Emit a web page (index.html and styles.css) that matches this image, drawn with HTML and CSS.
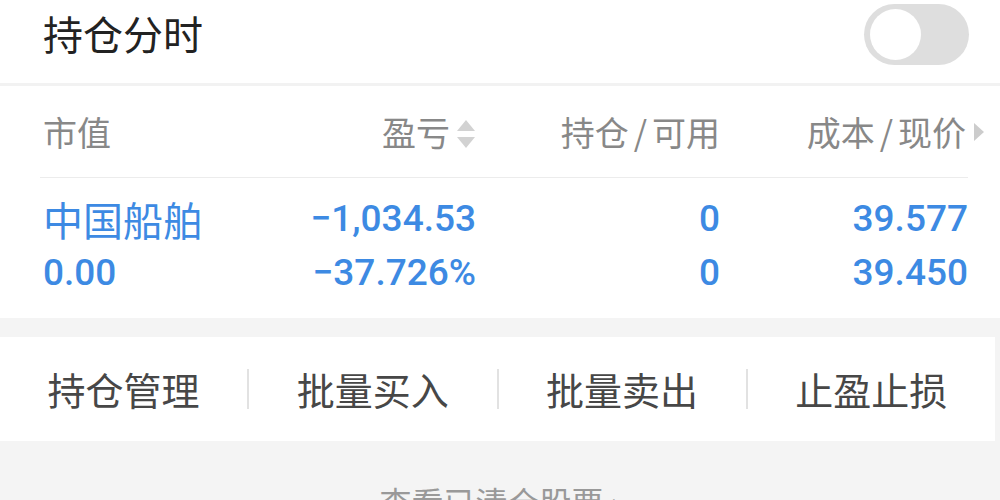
FILE: index.html
```html
<!DOCTYPE html>
<html lang="zh-CN">
<head>
    <meta charset="UTF-8">
    <meta name="viewport" content="width=device-width, initial-scale=1.0">
    <title>持仓</title>
    <link rel="stylesheet" href="styles.css">
</head>
<body>

<!-- 持仓分时 开关 -->
<div class="switch-bar">
    <span class="switch-title">持仓分时</span>
    <div class="toggle"><span class="knob"></span></div>
</div>

<!-- 持仓列表 -->
<div class="holdings">
    <div class="grid head">
        <div class="cell left">市值</div>
        <div class="cell">盈亏<svg class="sort" width="20" height="32" viewBox="0 0 20 32"><polygon points="10,2 19,13 1,13" fill="#d2d2d2"/><polygon points="1,19 19,19 10,30" fill="#d2d2d2"/></svg></div>
        <div class="cell">持仓<span class="slash">/</span>可用</div>
        <div class="cell last">成本<span class="slash">/</span>现价<svg class="more" width="10" height="18" viewBox="0 0 10 18"><polygon points="0,0 10,9 0,18" fill="#cccccc"/></svg></div>
    </div>
    <div class="grid row">
        <div class="cell left">
            <div class="name">中国船舶</div>
            <div>0.00</div>
        </div>
        <div class="cell">
            <div>−1,034.53</div>
            <div>−37.726%</div>
        </div>
        <div class="cell">
            <div>0</div>
            <div>0</div>
        </div>
        <div class="cell">
            <div>39.577</div>
            <div>39.450</div>
        </div>
    </div>
</div>

<div class="spacer"></div>

<!-- 操作按钮 -->
<div class="actions">
    <div class="action">持仓管理</div>
    <div class="action">批量买入</div>
    <div class="action">批量卖出</div>
    <div class="action">止盈止损</div>
</div>

<div class="footer">查看已清仓股票 ›</div>

</body>
</html>
```

FILE: styles.css
```css
body {
    margin: 0;
    background-color: #f4f4f4;
    font-family: "Noto Sans CJK SC", sans-serif;
    color: #222;
}

/* Switch Bar */
.switch-bar {
    height: 86px;
    box-sizing: border-box;
    background-color: #fff;
    display: flex;
    justify-content: space-between;
    align-items: center;
    padding: 0 31px 14px 43px;
    border-bottom: 3px solid #f2f2f2;
}

.switch-title {
    font-size: 40px;
    line-height: 1;
    color: #222;
    margin-top: -4px;
}

.toggle {
    width: 105px;
    height: 61px;
    border-radius: 31px;
    background-color: #dedede;
    display: flex;
    align-items: center;
    padding-left: 6px;
    box-sizing: border-box;
    margin-top: -1px;
}

.knob {
    width: 51px;
    height: 51px;
    border-radius: 50%;
    background-color: #fff;
}

/* Holdings Table */
.holdings {
    background-color: #fff;
    padding: 0 32px 0 40px;
}

.grid {
    display: grid;
    grid-template-columns: 250px 186px 244px 248px;
}

.cell {
    text-align: right;
    position: relative;
}

.cell.left {
    text-align: left;
    padding-left: 3px;
}

.head {
    height: 91px;
    line-height: 91px;
    font-size: 34px;
    color: #888;
    border-bottom: 1px solid #ececec;
}

.head .cell.last {
    padding-right: 2px;
}

.slash {
    margin: 0 5px;
}

.sort {
    vertical-align: middle;
    margin-left: 6px;
    margin-top: -6px;
}

.more {
    position: absolute;
    right: -16px;
    top: 37px;
}

.row {
    padding: 14px 0 18px;
    font-family: Roboto, "Noto Sans CJK SC", sans-serif;
    font-size: 37px;
    font-weight: 500;
    line-height: 54px;
    color: #3d8ae3;
}

.name {
    font-family: "Noto Sans CJK SC", sans-serif;
    font-size: 40px;
    font-weight: 400;
}

.spacer {
    height: 19px;
}

/* Action Bar */
.actions {
    width: 995px;
    height: 104px;
    background-color: #fff;
    display: flex;
    align-items: center;
}

.action {
    flex: 1;
    text-align: center;
    font-size: 38px;
    line-height: 40px;
    color: #474747;
}

.action + .action {
    border-left: 2px solid #e2e2e2;
}

/* Footer Link */
.footer {
    text-align: center;
    font-size: 32px;
    color: #999;
    padding-top: 44px;
    line-height: 1;
}
```
